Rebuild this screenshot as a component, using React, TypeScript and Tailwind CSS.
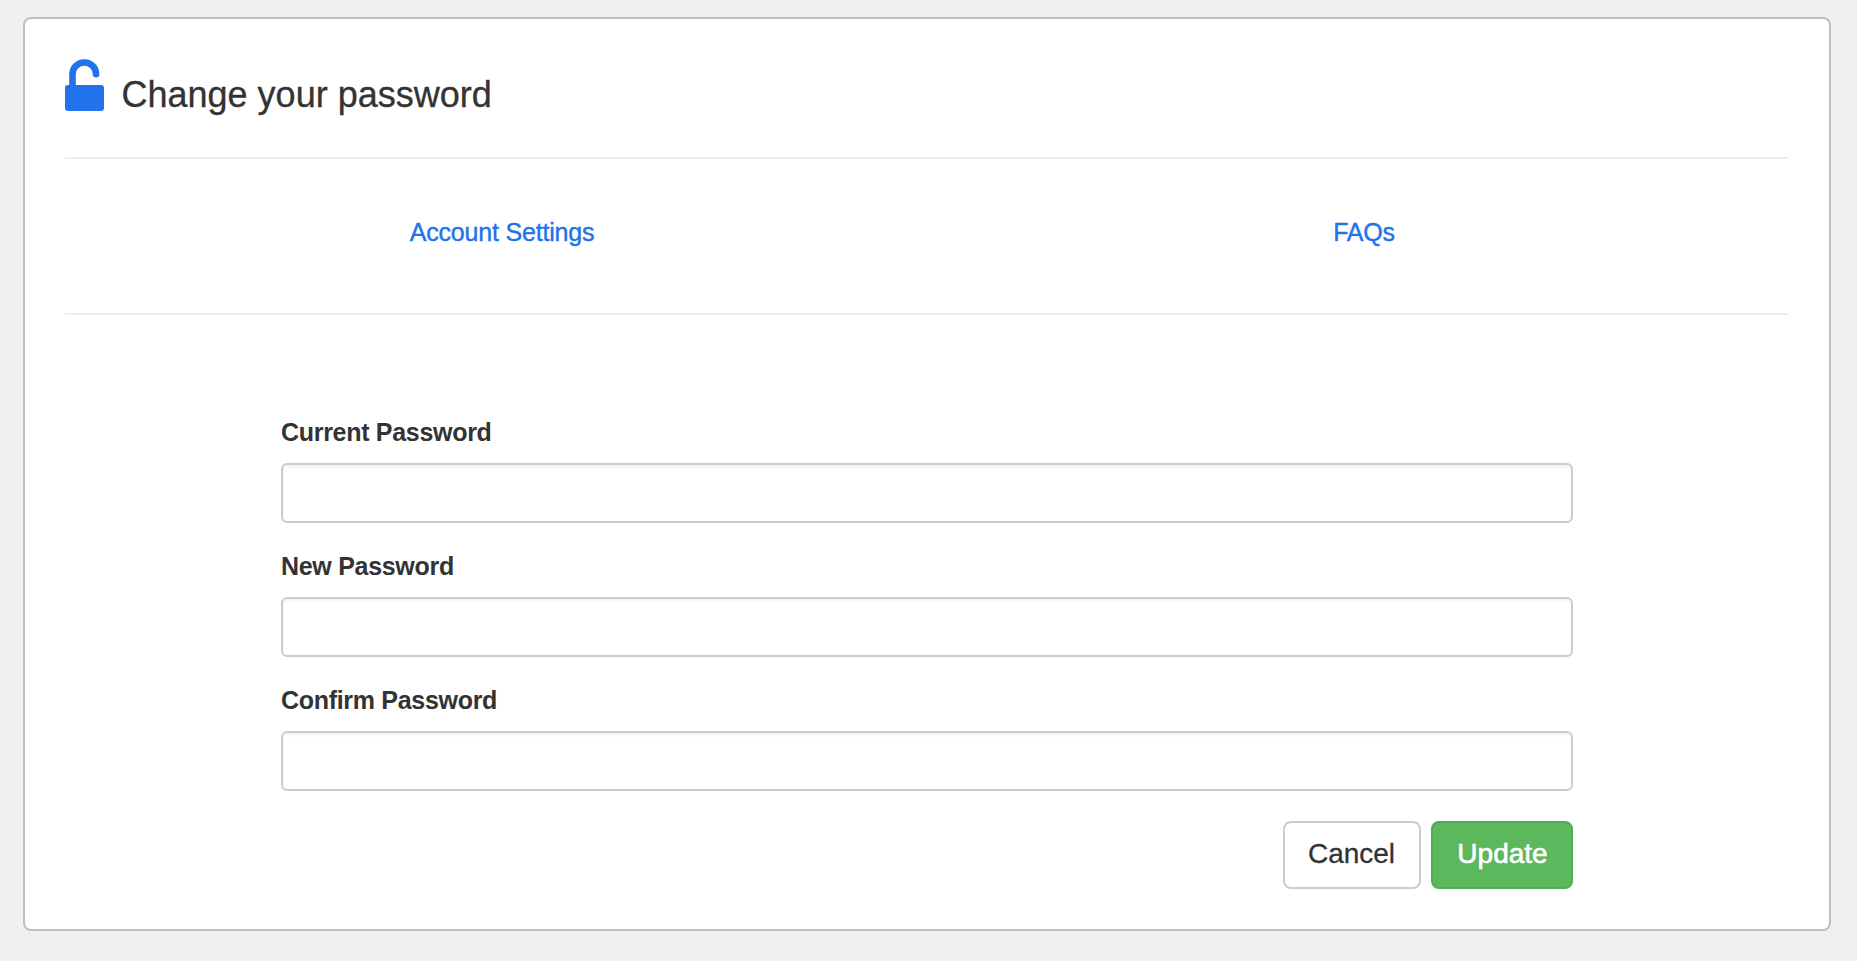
const fields = [
  { id: "current", label: "Current Password" },
  { id: "next", label: "New Password" },
  { id: "confirm", label: "Confirm Password" },
];

function UnlockIcon() {
  return (
    <svg className="h-[52px] w-[39px] shrink-0" viewBox="0 0 39 52" fill="none">
      <path
        d="M7.5 28V15.3a11.8 11.8 0 0 1 23.6 0"
        stroke="#2272eb"
        strokeWidth="6.6"
        strokeLinecap="round"
      />
      <rect y="26" width="39" height="26" rx="3" fill="#2272eb" />
    </svg>
  );
}

export default function App() {
  return (
    <div className="flex h-[961px] w-full bg-[#f0f0f0] pt-[17px] pr-[26px] pb-[30px] pl-[23px] font-['Liberation_Sans',Arial,sans-serif] text-[#333]">
      <main className="flex-1 rounded-lg border-2 border-[#bfbfbf] bg-white px-10">
        <header className="flex h-[140px] items-start border-b-2 border-[#eee] pt-10">
          <UnlockIcon />
          <h1 className="mt-4 ml-[17.5px] text-[36px] leading-[40px] [-webkit-text-stroke:0.3px_#333]">
            Change your password
          </h1>
        </header>

        <nav className="grid h-[156px] grid-cols-2 border-b-2 border-[#eee] pt-[55px] text-center text-[25px] leading-9 tracking-[-0.2px] text-[#2272eb] [-webkit-text-stroke:0.4px_#2272eb]">
          <a href="#settings" className="pl-3">Account Settings</a>
          <a href="#faqs" className="pl-3">FAQs</a>
        </nav>

        <form className="mx-auto w-[1292px] pt-[99px]">
          <div className="flex flex-col gap-[25px]">
            {fields.map((field) => (
              <div key={field.id}>
                <label
                  htmlFor={field.id}
                  className="mb-[13px] block text-[25px] leading-9 font-bold tracking-[-0.3px]"
                >
                  {field.label}
                </label>
                <input
                  id={field.id}
                  type="password"
                  className="block h-[60px] w-full rounded-md border-2 border-[#ccc] bg-white px-5 shadow-[inset_0_2px_3px_rgba(0,0,0,0.06)] outline-none"
                />
              </div>
            ))}
          </div>
          <div className="mt-[30px] flex justify-end gap-[10px] text-[28px] leading-10">
            <button
              type="button"
              className="h-[68px] w-[138px] rounded-lg border-2 border-[#ccc] bg-white pr-px pb-[3px] [-webkit-text-stroke:0.3px_#333]"
            >
              Cancel
            </button>
            <button
              type="button"
              className="h-[68px] w-[142px] rounded-lg border-2 border-[#4cae4c] bg-[#5cb85c] pb-[3px] pl-px text-white [-webkit-text-stroke:0.6px_#fff]"
            >
              Update
            </button>
          </div>
        </form>
      </main>
    </div>
  );
}
